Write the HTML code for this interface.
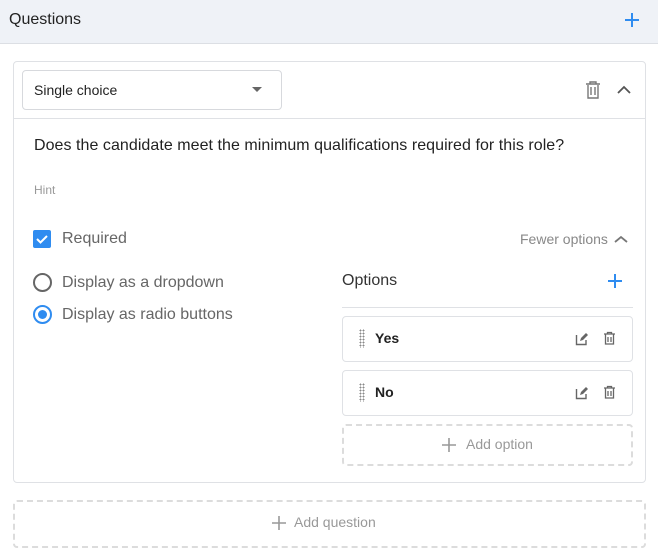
<!DOCTYPE html><html><head><style>
*{box-sizing:border-box;margin:0;padding:0}
body{width:658px;height:557px;background:#fff;font-family:"Liberation Sans",sans-serif;position:relative;overflow:hidden;color:#222}
.a{position:absolute}
.t{position:absolute;white-space:nowrap;line-height:1}
</style></head><body>
<div class="a" style="left:0;top:0;width:658px;height:44px;background:#eff2f7;border-bottom:1px solid #dcdfe4"></div>
<div class="t" style="left:9px;top:12px;font-size:16px;color:#222">Questions</div>
<svg class="a" style="left:624px;top:12px" width="16" height="16"><path d="M8 1v14M1 8h14" stroke="#2f8cf0" stroke-width="2"/></svg>
<div class="a" style="left:13px;top:61px;width:633px;height:422px;border:1px solid #dfe1e5;border-radius:4px"></div>
<div class="a" style="left:13px;top:118px;width:633px;height:1px;background:#dfe1e5"></div>
<div class="a" style="left:22px;top:70px;width:260px;height:40px;border:1px solid #d7d9dd;border-radius:4px"></div>
<div class="t" style="left:34px;top:83px;font-size:14px;color:#222">Single choice</div>
<svg class="a" style="left:252px;top:87px" width="12" height="6"><path d="M0 0h10L5 5z" fill="#666"/></svg>
<svg class="a" style="left:585px;top:81px" width="16" height="18"><path d="M1 3h14M5 3V1h6v2M3 4v13h10V4M6 6v8M10 6v8" stroke="#777" stroke-width="1.4" fill="none"/></svg>
<svg class="a" style="left:617px;top:85px" width="14" height="9"><path d="M1 8l6-6 6 6" stroke="#555" stroke-width="1.8" fill="none"/></svg>
<div class="t" style="left:34px;top:138px;font-size:16px;color:#222;letter-spacing:0.05px">Does the candidate meet the minimum qualifications required for this role?</div>
<div class="t" style="left:34px;top:184px;font-size:12px;color:#999">Hint</div>
<div class="a" style="left:33px;top:230px;width:18px;height:18px;background:#2f8cf0;border-radius:2px"></div>
<svg class="a" style="left:33px;top:230px" width="18" height="18"><path d="M4 9l3.5 3.5L14 6" stroke="#fff" stroke-width="2" fill="none"/></svg>
<div class="t" style="left:62px;top:231px;font-size:16px;color:#666">Required</div>
<div class="t" style="left:520px;top:232px;font-size:14px;color:#888">Fewer options</div>
<svg class="a" style="left:614px;top:235px" width="14" height="9"><path d="M1 7l6-5 6 5" stroke="#777" stroke-width="1.8" fill="none"/></svg>
<div class="a" style="left:33px;top:273px;width:19px;height:19px;border:2px solid #666;border-radius:50%"></div>
<div class="t" style="left:62px;top:275px;font-size:16px;color:#666">Display as a dropdown</div>
<div class="a" style="left:33px;top:305px;width:19px;height:19px;border:2px solid #2f8cf0;border-radius:50%"></div>
<div class="a" style="left:38px;top:310px;width:9px;height:9px;background:#2f8cf0;border-radius:50%"></div>
<div class="t" style="left:62px;top:307px;font-size:16px;color:#666">Display as radio buttons</div>
<div class="t" style="left:342px;top:273px;font-size:16px;color:#333">Options</div>
<svg class="a" style="left:607px;top:273px" width="16" height="16"><path d="M8 1v14M1 8h14" stroke="#2f8cf0" stroke-width="2"/></svg>
<div class="a" style="left:342px;top:307px;width:291px;height:1px;background:#dfe1e5"></div>
<div class="a" style="left:342px;top:316px;width:291px;height:46px;border:1px solid #dfe1e5;border-radius:4px"></div>
<div class="a" style="left:342px;top:370px;width:291px;height:46px;border:1px solid #dfe1e5;border-radius:4px"></div>
<div class="a" style="left:359px;top:329px;width:6px;height:19px;background:radial-gradient(circle,#888 0.8px,transparent 1px) 0 0/3px 3px"></div>
<div class="a" style="left:359px;top:383px;width:6px;height:19px;background:radial-gradient(circle,#888 0.8px,transparent 1px) 0 0/3px 3px"></div>
<div class="t" style="left:375px;top:331px;font-size:14px;font-weight:bold;color:#222">Yes</div>
<div class="t" style="left:375px;top:385px;font-size:14px;font-weight:bold;color:#222">No</div>
<svg class="a" style="left:575px;top:332px" width="14" height="14"><path d="M1.5 3v9.5H11V8" stroke="#666" stroke-width="1.4" fill="none"/><path d="M5 9l1-3 5-5 2 2-5 5z" fill="#666"/></svg>
<svg class="a" style="left:603px;top:331px" width="13" height="14"><path d="M1 3h11M4.5 3V1.5h4V3M2.5 3.5v9.5h8V3.5M5 6v5M8 6v5" stroke="#666" stroke-width="1.3" fill="none"/></svg>
<svg class="a" style="left:575px;top:386px" width="14" height="14"><path d="M1.5 3v9.5H11V8" stroke="#666" stroke-width="1.4" fill="none"/><path d="M5 9l1-3 5-5 2 2-5 5z" fill="#666"/></svg>
<svg class="a" style="left:603px;top:385px" width="13" height="14"><path d="M1 3h11M4.5 3V1.5h4V3M2.5 3.5v9.5h8V3.5M5 6v5M8 6v5" stroke="#666" stroke-width="1.3" fill="none"/></svg>
<div class="a" style="left:342px;top:424px;width:291px;height:42px;border:2px dashed #dcdcdc;border-radius:4px"></div>
<svg class="a" style="left:442px;top:438px" width="14" height="14"><path d="M7 0v14M0 7h14" stroke="#999" stroke-width="1.6"/></svg>
<div class="t" style="left:466px;top:437px;font-size:14px;color:#999">Add option</div>
<div class="a" style="left:13px;top:500px;width:633px;height:48px;border:2px dashed #dcdcdc;border-radius:4px"></div>
<svg class="a" style="left:272px;top:516px" width="14" height="14"><path d="M7 0v14M0 7h14" stroke="#999" stroke-width="1.6"/></svg>
<div class="t" style="left:294px;top:515px;font-size:14px;color:#999">Add question</div>
</body></html>
